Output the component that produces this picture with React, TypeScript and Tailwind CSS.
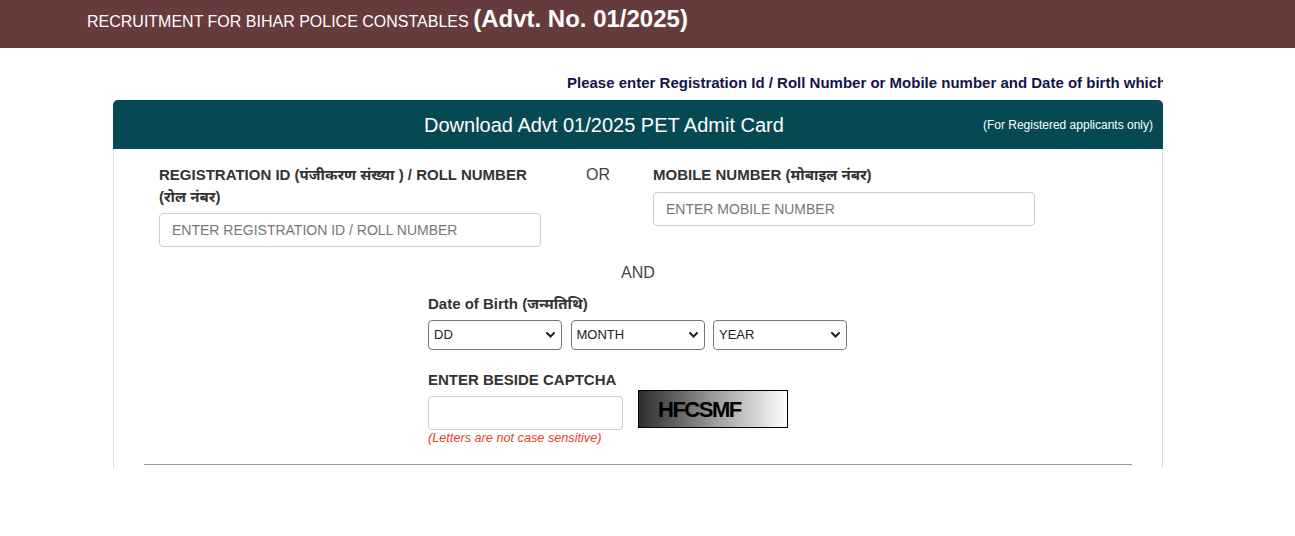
import React from 'react';

const hindi = "font-['Liberation_Sans','Noto_Sans','Noto_Sans_Devanagari',Arial,sans-serif]";

function Chevron() {
  return (
    <svg className="pointer-events-none absolute right-[7px] top-1/2 -translate-y-1/2" width="9" height="6" viewBox="0 0 9 6">
      <path d="M1 1 L4.5 4.5 L8 1" stroke="#222" strokeWidth="2" fill="none" strokeLinecap="round" />
    </svg>
  );
}

function DateSelect({ label, width }: { label: string; width: string }) {
  return (
    <div className={`relative ${width}`}>
      <select className="h-[30px] w-full appearance-none rounded-[4px] border border-[#767676] bg-white pl-[5px] text-[13px] text-[#222]">
        <option>{label}</option>
      </select>
      <Chevron />
    </div>
  );
}

export default function App() {
  return (
    <div className={`min-h-[536px] w-[1295px] bg-white ${hindi}`}>
      {/* Top banner */}
      <div className="h-12 bg-[#663b3b] pl-[87px] pt-[1px] text-white">
        <span className="text-[16px]">RECRUITMENT FOR BIHAR POLICE CONSTABLES </span>
        <span className="text-[24px] font-bold">(Advt. No. 01/2025)</span>
      </div>

      <div className="ml-[113px] w-[1050px]">
        {/* Scrolling notice */}
        <div className="overflow-hidden whitespace-nowrap pt-[25px] pb-[7px]">
          <p className="pl-[454px] text-[15px] font-bold leading-5 text-[#14144a]">
            Please enter Registration Id / Roll Number or Mobile number and Date of birth which you have entered during registration.
          </p>
        </div>

        {/* Card */}
        <div className="rounded-t-[5px] border-x border-[#dcdcdc]">
          <div className="-mx-px flex h-[49px] items-center rounded-t-[5px] bg-[#064953] text-white">
            <div className="pl-[311px] text-[20px]">Download Advt 01/2025 PET Admit Card</div>
            <div className="ml-auto pr-[10px] text-[12px]">(For Registered applicants only)</div>
          </div>

          <div className="pt-[15px] text-[#333]">
            <div className="flex pl-[45px]">
              <div className="w-[382px]">
                <label className="mb-[5px] block text-[15px] font-bold leading-[22px]">
                  REGISTRATION ID (पंजीकरण संख्या ) / ROLL NUMBER (रोल नंबर)
                </label>
                <input
                  className="h-[34px] w-full rounded-[4px] border border-[#ccc] px-3 text-[14px] placeholder:text-[#777]"
                  placeholder="ENTER REGISTRATION ID / ROLL NUMBER"
                />
              </div>
              <div className="ml-[45px] w-[67px] text-[16px] leading-[22px] text-[#444]">OR</div>
              <div className="w-[382px]">
                <label className="mb-[6px] block text-[15px] font-bold leading-[22px]">
                  MOBILE NUMBER (मोबाइल नंबर)
                </label>
                <input
                  className="h-[34px] w-full rounded-[4px] border border-[#ccc] px-3 text-[14px] placeholder:text-[#777]"
                  placeholder="ENTER MOBILE NUMBER"
                />
              </div>
            </div>

            <div className="mt-[16px] text-center text-[16px] leading-5 text-[#444]">AND</div>

            <div className="ml-[314px] mt-[10px]">
              <label className="mb-[5px] block text-[15px] font-bold leading-[22px]">Date of Birth (जन्मतिथि)</label>
              <div className="flex gap-[8.5px]">
                <DateSelect label="DD" width="w-[134px]" />
                <DateSelect label="MONTH" width="w-[134px]" />
                <DateSelect label="YEAR" width="w-[134px]" />
              </div>

              <label className="mb-[5px] mt-[19px] block text-[15px] font-bold leading-[22px]">ENTER BESIDE CAPTCHA</label>
              <div className="flex items-start gap-[15px]">
                <div>
                  <input className="h-[34px] w-[195px] rounded-[4px] border border-[#ccc] px-3 text-[14px]" />
                  <p className="text-[12.7px] italic leading-4 text-[#e0452b]">(Letters are not case sensitive)</p>
                </div>
                <div className="-mt-[6px] flex h-[38px] w-[150px] items-center border border-black bg-gradient-to-r from-[#2e2e2e] via-[#9a9a9a] to-white pl-[19px]">
                  <span className="text-[22px] font-bold tracking-[-1.5px] text-black">HFCSMF</span>
                </div>
              </div>
            </div>

            <div className="mx-[30px] mt-[18px] border-t border-[#999]" />
            <div className="h-[3px]" />
          </div>
        </div>
      </div>
    </div>
  );
}
